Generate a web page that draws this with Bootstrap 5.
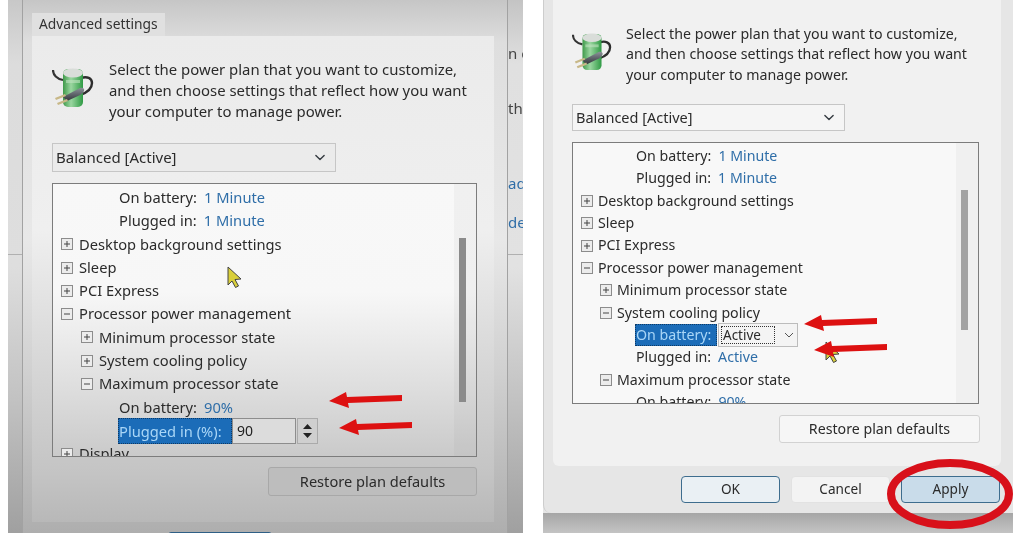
<!DOCTYPE html>
<html lang="en">
<head>
  <meta charset="UTF-8" />
  <meta name="viewport" content="width=device-width, initial-scale=1.0"/>
  <title>Advanced settings</title>
  <link href="https://cdn.jsdelivr.net/npm/bootstrap@5.3.0/dist/css/bootstrap.min.css" rel="stylesheet">
  <style>
    body { background: #fff; margin: 0; overflow: hidden; font-family: "Noto Sans", "Open Sans", sans-serif; color: #2b2b2b; }
    .page-wrap { width: 1024px; height: 536px; padding-left: 8px; gap: 20px; }
    .shot { height: 533px; overflow: hidden; position: relative; filter: blur(.45px); flex: none; }
    .shot-left { width: 515px; }
    .shot-right { width: 470px; background: linear-gradient(#e6e6e6, #e6e6e6 513px, #a6a6a6 513px, #c4c4c4); }

    .side-strip { width: 14px; flex: none; background: linear-gradient(transparent 254px, #b0b0b0 254px, #b0b0b0 255px, transparent 255px), linear-gradient(#c8c8c8, #dcdcdc 12%, #dedede 50%, #c2c2c2 75%, #a0a0a0); }
    .side-right { width: 15px; flex: none; font-size: 15px; white-space: nowrap; overflow: hidden; color: #444; background: linear-gradient(transparent 254px, #b0b0b0 254px, #b0b0b0 255px, transparent 255px), linear-gradient(#c4c4c4, #e0e0e0 12%, #e2e2e2 50%, #c2c2c2 75%, #a0a0a0); }
    .side-right span { display: block; line-height: 20px; }
    .side-right .link-ish { color: #2f6ea8; }
    .s1 { margin-top: 43px; } .s2 { margin-top: 35px; } .s3 { margin-top: 55px; } .s4 { margin-top: 19px; }

    .dlg-left { width: 486px; flex: none; padding: 13px 13px 0 9px; border-left: 1px solid #a2a2a2; border-right: 1px solid #a2a2a2; background: linear-gradient(#c6c6c6, #dedede 8%, #e8e8e8 45%, #d0d0d0 70%, #aeaeae); }
    .tab-label { width: 133px; height: 23px; line-height: 21px; padding-left: 7px; font-size: 13.8px; background: #e0e0e0; color: #333; }
    .pane-left { height: 486px; padding: 23px 17px 0 20px; background: linear-gradient(#ebebeb, #efefef 40%, #d9d9d9 65%, #c4c4c4 90%, #b8b8b8); }
    .dlg-foot { height: 20px; }
    .foot-btn { width: 104px; height: 20px; margin: 10px 0 0 136px; border: 1px solid #2e5f86; border-radius: 3px; background: #c4c9cc; }

    .dlg-right { width: 469px; height: 513px; flex: none; background: #e6e6e6; border-radius: 0 0 8px 8px; border-left: 1px solid #cdcdcd; }
    .pane-right { height: 466px; margin: 0 11px 0 9px; padding: 24px 19px 0; background: #f1f1f1; border-radius: 0 0 6px 6px; }
    .btn-row { padding: 10px 12px 0 0; gap: 11px; }

    .intro { white-space: nowrap; }
    .intro svg { flex: none; }
    .shot-left .intro { font-size: 14.9px; line-height: 21px; gap: 15px; }
    .shot-right .intro { font-size: 14.2px; line-height: 20.3px; gap: 14px; }

    .plan-select.form-select { border-radius: 0; color: #2b2b2b; border: 1px solid #c6c6c6; padding: 0 0 0 3px; background-position: right 8px center; background-size: 14px 11px; }
    .shot-left .plan-select { width: 284px; height: 29px; margin-top: 21px; font-size: 15px; background-color: #ebebeb; }
    .shot-right .plan-select { width: 273px; height: 27px; margin-top: 19px; font-size: 14.5px; background-color: #f5f5f5; }

    .tree-box { overflow: hidden; border: 1px solid #7c7c7c; }
    .shot-left .tree-box { width: 425px; height: 274px; margin-top: 11px; background: linear-gradient(#f8f8f8, #f7f7f7 40%, #e0e0e0 72%, #cacaca); }
    .shot-right .tree-box { width: 407px; height: 262px; margin-top: 11px; background: #f8f8f8; }
    .tree-list { white-space: nowrap; padding-top: 2px; }
    .shot-left .tree-row { height: 23.3px; line-height: 23.3px; font-size: 14.7px; }
    .shot-right .tree-row { height: 22.4px; line-height: 22.4px; font-size: 14.2px; }
    .exp { flex: none; }
    .shot-left .exp { margin-right: 6px; }
    .shot-right .exp { margin-right: 5px; }
    .shot-left .lv1 { padding-left: 8px; } .shot-left .lv2 { padding-left: 28px; } .shot-left .lv3 { padding-left: 66px; }
    .shot-right .lv1 { padding-left: 8px; } .shot-right .lv2 { padding-left: 27px; } .shot-right .lv3 { padding-left: 63px; }
    .val { color: #2f6ea8; margin-left: 7px; }
    .picked { background: #1b6cb8; color: #a9d6f7; outline: 1px dotted #0d3a66; outline-offset: -1px; padding: 0 1px; margin-left: -1px; flex: none; }
    .shot-left .picked { width: 114px; height: 26px; line-height: 26px; }
    .shot-right .picked { width: 82px; height: 22px; line-height: 22px; }

    .scroll-track { width: 22px; flex: none; margin-left: auto; background: rgba(120,120,120,.06); }
    .scroll-thumb { width: 7px; background: #8b8b8b; }
    .shot-left .scroll-thumb { height: 164px; margin: 54px 0 0 5px; }
    .shot-right .scroll-thumb { height: 140px; margin: 47px 0 0 5px; background: #a3a3a3; }

    .num-input.form-control { width: 64px; height: 26px; flex: none; border-radius: 0; padding: 0 0 0 4px; font-size: 14px; background: #dcdcdc; border: 1px solid #8d8d8d; color: #222; min-height: 0; }
    .spin { width: 21px; height: 26px; flex: none; margin-left: 1px; background: #cfcfcf; border: 1px solid #aaa; }
    .spin svg { display: block; }
    .combo { width: 80px; height: 24px; flex: none; margin-left: 1px; font-size: 13.5px; background: #f4f4f4; border: 1px solid #bcbcbc; padding: 2px; }
    .combo-val { width: 54px; height: 18px; line-height: 17px; border: 1px dotted #333; padding-left: 1px; }
    .combo svg { margin-left: 8px; }

    .restore-btn.btn { border-radius: 3px; padding: 0; display: block; margin-left: auto; color: #2b2b2b; }
    .shot-left .restore-btn { width: 209px; height: 29px; margin-top: 10px; margin-right: 0; font-size: 14.6px; background: #bdbdbd; border: 1px solid #a8a8a8; }
    .shot-right .restore-btn { width: 201px; height: 28px; margin-top: 11px; margin-right: 2px; font-size: 14.2px; background: #f6f6f6; border: 1px solid #d2d2d2; }
    .dlg-btn.btn { width: 99px; height: 27px; padding: 0; font-size: 13.6px; border-radius: 4px; color: #2b2b2b; background: #f3f3f3; border: 1px solid #e2e2e2; }
    .dlg-btn.is-default { border: 1px solid #3e6d8e; background: #eaf0f4; }
    .dlg-btn.is-apply { border: 1px solid #3e6d8e; background: #c9dcea; }

    .overlay { position: absolute; pointer-events: none; }
    .ring { left: 0; top: 0; }
  </style>
</head>
<body>

  <svg width="0" height="0" class="d-block position-absolute">
    <defs>
      <linearGradient id="batt" x1="0" x2="1" y1="0" y2="0">
        <stop offset="0" stop-color="#3f9a4a"/><stop offset=".4" stop-color="#9ad6a0"/><stop offset="1" stop-color="#2f9a44"/>
      </linearGradient>
      <linearGradient id="plug-grey" x1="0" x2="0" y1="0" y2="1">
        <stop offset="0" stop-color="#8c939a"/><stop offset="1" stop-color="#32363b"/>
      </linearGradient>
      <symbol id="power-icon" viewBox="0 0 42 42">
        <path d="M1 3c0 5 4 9 10 10" fill="none" stroke="#333" stroke-width="2.200"/>
        <path d="M29 11c6-2 11 0 11 5 0 6-6 10-12 12" fill="none" stroke="#2d2d2d" stroke-width="2.400"/>
        <rect x="11" y="2" width="20" height="38" rx="5" fill="url(#batt)"/>
        <ellipse cx="21" cy="6" rx="10" ry="4.500" fill="#d9ddd9"/>
        <path d="M14 13h14v3H14z" fill="#bfe3c0" opacity=".6"/>
        <path d="M11 30l17-9c3-1 5 1 4 3-1 2-3 4-6 5l-11 5z" fill="url(#plug-grey)"/>
        <path d="M3 31l10-4 1 2-10 4zM5 36l10-4 1 2-10 4z" fill="#c8b888"/>
      </symbol>
      <symbol id="ex-plus" viewBox="0 0 12 12">
        <rect x=".5" y=".5" width="11" height="11" fill="#ececec" stroke="#8c8c8c"/><path d="M3 6h6M6 3v6" stroke="#444"/>
      </symbol>
      <symbol id="ex-minus" viewBox="0 0 12 12">
        <rect x=".5" y=".5" width="11" height="11" fill="#ececec" stroke="#8c8c8c"/><path d="M3 6h6" stroke="#444"/>
      </symbol>
      <symbol id="red-arrow" viewBox="0 0 73 18">
        <path d="M0 10L17 1l1 5 55-2v6l-54 2 1 5z" fill="#dd1111"/>
      </symbol>
      <symbol id="mouse-ptr" viewBox="0 0 16 22">
        <path d="M1 1l13 12-6 .5 3.500 6.500-3 1.500-3.500-6.500-4 4z" fill="#d9cf3a" stroke="#444" stroke-width="1"/>
      </symbol>
    </defs>
  </svg>

  <div class="page-wrap d-flex">

    <!-- left screenshot -->
    <div class="shot shot-left d-flex">
      <div class="side-strip"></div>
      <div class="dlg-left">
        <div class="tab-label">Advanced settings</div>
        <div class="pane-left">
          <div class="intro d-flex">
            <svg width="42" height="42" class="mt-2"><use href="#power-icon"/></svg>
            <div>Select the power plan that you want to customize,<br>and then choose settings that reflect how you want<br>your computer to manage power.</div>
          </div>
          <select class="form-select plan-select"><option>Balanced [Active]</option></select>
          <div class="tree-box d-flex">
            <ul class="list-unstyled mb-0 tree-list">
              <li class="tree-row lv3">On battery:<span class="val">1 Minute</span></li>
              <li class="tree-row lv3">Plugged in:<span class="val">1 Minute</span></li>
              <li class="tree-row lv1 d-flex align-items-center"><svg class="exp" width="12" height="12"><use href="#ex-plus"/></svg>Desktop background settings</li>
              <li class="tree-row lv1 d-flex align-items-center"><svg class="exp" width="12" height="12"><use href="#ex-plus"/></svg>Sleep</li>
              <li class="tree-row lv1 d-flex align-items-center"><svg class="exp" width="12" height="12"><use href="#ex-plus"/></svg>PCI Express</li>
              <li class="tree-row lv1 d-flex align-items-center"><svg class="exp" width="12" height="12"><use href="#ex-minus"/></svg>Processor power management</li>
              <li class="tree-row lv2 d-flex align-items-center"><svg class="exp" width="12" height="12"><use href="#ex-plus"/></svg>Minimum processor state</li>
              <li class="tree-row lv2 d-flex align-items-center"><svg class="exp" width="12" height="12"><use href="#ex-plus"/></svg>System cooling policy</li>
              <li class="tree-row lv2 d-flex align-items-center"><svg class="exp" width="12" height="12"><use href="#ex-minus"/></svg>Maximum processor state</li>
              <li class="tree-row lv3">On battery:<span class="val">90%</span></li>
              <li class="tree-row lv3 d-flex align-items-center">
                <span class="picked">Plugged in (%):</span>
                <input class="form-control num-input" value="90">
                <span class="spin">
                  <svg width="19" height="24" viewBox="0 0 19 24"><path d="M5 10l4.500-5 4.500 5zM5 14l4.500 5 4.500-5z" fill="#222"/></svg>
                </span>
              </li>
              <li class="tree-row lv1 d-flex align-items-center"><svg class="exp" width="12" height="12"><use href="#ex-plus"/></svg>Display</li>
            </ul>
            <div class="scroll-track"><div class="scroll-thumb"></div></div>
          </div>
          <button type="button" class="btn restore-btn">Restore plan defaults</button>
        </div>
        <div class="dlg-foot"><div class="foot-btn"></div></div>
      </div>
      <div class="side-right">
        <span class="s1">n c</span>
        <span class="s2">th</span>
        <span class="s3 link-ish">ad</span>
        <span class="s4 link-ish">de</span>
      </div>
      <svg class="overlay" width="16" height="22" style="left:219px;top:266px"><use href="#mouse-ptr"/></svg>
      <svg class="overlay" width="73" height="18" style="left:321px;top:391px"><use href="#red-arrow"/></svg>
      <svg class="overlay" width="73" height="18" style="left:331px;top:418px"><use href="#red-arrow"/></svg>
    </div>

    <!-- right screenshot -->
    <div class="shot shot-right">
      <div class="dlg-right">
        <div class="pane-right">
          <div class="intro d-flex">
            <svg width="40" height="40" class="mt-2"><use href="#power-icon"/></svg>
            <div>Select the power plan that you want to customize,<br>and then choose settings that reflect how you want<br>your computer to manage power.</div>
          </div>
          <select class="form-select plan-select"><option>Balanced [Active]</option></select>
          <div class="tree-box d-flex">
            <ul class="list-unstyled mb-0 tree-list">
              <li class="tree-row lv3">On battery:<span class="val">1 Minute</span></li>
              <li class="tree-row lv3">Plugged in:<span class="val">1 Minute</span></li>
              <li class="tree-row lv1 d-flex align-items-center"><svg class="exp" width="12" height="12"><use href="#ex-plus"/></svg>Desktop background settings</li>
              <li class="tree-row lv1 d-flex align-items-center"><svg class="exp" width="12" height="12"><use href="#ex-plus"/></svg>Sleep</li>
              <li class="tree-row lv1 d-flex align-items-center"><svg class="exp" width="12" height="12"><use href="#ex-plus"/></svg>PCI Express</li>
              <li class="tree-row lv1 d-flex align-items-center"><svg class="exp" width="12" height="12"><use href="#ex-minus"/></svg>Processor power management</li>
              <li class="tree-row lv2 d-flex align-items-center"><svg class="exp" width="12" height="12"><use href="#ex-plus"/></svg>Minimum processor state</li>
              <li class="tree-row lv2 d-flex align-items-center"><svg class="exp" width="12" height="12"><use href="#ex-minus"/></svg>System cooling policy</li>
              <li class="tree-row lv3 d-flex align-items-center">
                <span class="picked">On battery:</span>
                <span class="combo d-flex align-items-center">
                  <span class="combo-val">Active</span>
                  <svg width="12" height="8" viewBox="0 0 12 8"><path d="M2 2l4 4 4-4" fill="none" stroke="#555"/></svg>
                </span>
              </li>
              <li class="tree-row lv3">Plugged in:<span class="val">Active</span></li>
              <li class="tree-row lv2 d-flex align-items-center"><svg class="exp" width="12" height="12"><use href="#ex-minus"/></svg>Maximum processor state</li>
              <li class="tree-row lv3">On battery:<span class="val">90%</span></li>
            </ul>
            <div class="scroll-track"><div class="scroll-thumb"></div></div>
          </div>
          <button type="button" class="btn restore-btn">Restore plan defaults</button>
        </div>
        <div class="btn-row d-flex justify-content-end">
          <button type="button" class="btn dlg-btn is-default">OK</button>
          <button type="button" class="btn dlg-btn">Cancel</button>
          <button type="button" class="btn dlg-btn is-apply">Apply</button>
        </div>
      </div>
      <svg class="overlay" width="16" height="22" style="left:282px;top:341px"><use href="#mouse-ptr"/></svg>
      <svg class="overlay" width="73" height="18" style="left:261px;top:314px"><use href="#red-arrow"/></svg>
      <svg class="overlay" width="73" height="18" style="left:271px;top:340px"><use href="#red-arrow"/></svg>
      <svg class="overlay ring" width="470" height="533"><ellipse cx="407" cy="494" rx="59" ry="31" fill="none" stroke="#d8101a" stroke-width="8"/></svg>
    </div>
  </div>

  <script src="https://cdn.jsdelivr.net/npm/bootstrap@5.3.0/dist/js/bootstrap.bundle.min.js"></script>
</body>
</html>
